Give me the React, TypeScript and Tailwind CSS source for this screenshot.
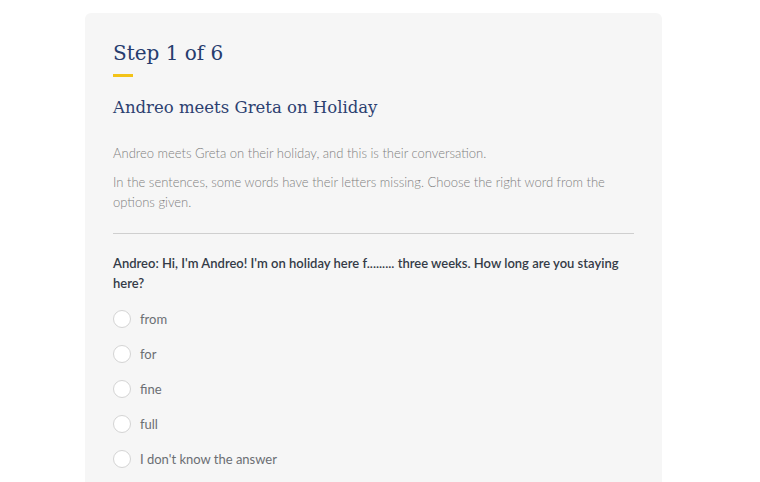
const options = ["from", "for", "fine", "full", "I don't know the answer"];

export default function App() {
  return (
    <div className="min-h-screen bg-white pt-[13px] pl-[85px]">
      <div className="w-[577px] h-[469px] rounded-t-md bg-[#f6f6f6] px-7 pt-[25px]" style={{ fontFamily: "Lato, 'Open Sans', sans-serif" }}>
        <h1 className="text-[20px] leading-[30px] text-[#263c6e]" style={{ fontFamily: "'DejaVu Serif', serif" }}>
          Step 1 of 6
        </h1>
        <div className="mt-[6px] h-[3px] w-[20px] bg-[#f3c318]" />
        <h2 className="mt-[18px] text-[16.5px] leading-[26px] text-[#2c4070]" style={{ fontFamily: "'DejaVu Serif', serif" }}>
          Andreo meets Greta on Holiday
        </h2>
        <p className="mt-[22px] text-[13px] leading-[20px] font-light text-[#7f7f7f]">
          Andreo meets Greta on their holiday, and this is their conversation.
        </p>
        <p className="mt-[9px] text-[13px] leading-[20px] font-light text-[#7f7f7f]">
          In the sentences, some words have their letters missing. Choose the right word from the options given.
        </p>
        <div className="mt-[21px] h-px bg-[#cfcfcf]" />
        <p className="mt-[19px] text-[13px] leading-[20px] font-semibold text-[#343b47]">
          Andreo: Hi, I'm Andreo! I'm on holiday here f......... three weeks. How long are you staying here?
        </p>
        <div className="mt-[17px] flex flex-col gap-[17px]">
          {options.map((o) => (
            <label key={o} className="flex items-center gap-[9px]">
              <span className="h-[18px] w-[18px] rounded-full border border-[#d4d4d4] bg-white" />
              <span className="text-[13px] leading-[18px] text-[#6b6e73]">{o}</span>
            </label>
          ))}
        </div>
      </div>
    </div>
  );
}
